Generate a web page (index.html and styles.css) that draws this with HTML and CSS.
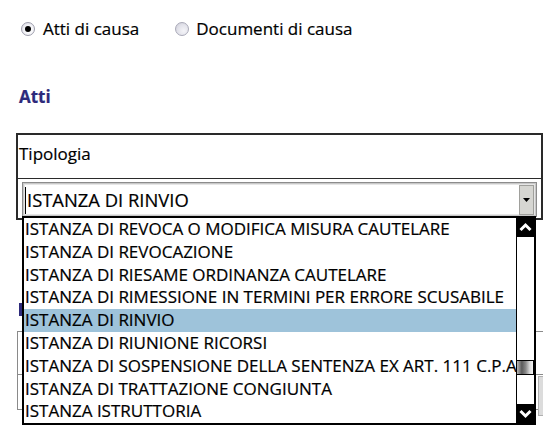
FILE: index.html
```html
<!DOCTYPE html>
<html lang="it">
<head>
<meta charset="utf-8">
<title>Atti di causa</title>
<link rel="stylesheet" href="styles.css">
</head>
<body>
<div class="page">
  <div class="radios">
    <label class="radio"><span class="dot checked"></span><span>Atti di causa</span></label>
    <label class="radio second"><span class="dot"></span><span>Documenti di causa</span></label>
  </div>

  <h2 class="heading">Atti</h2>

  <div class="box">
    <div class="box-head">Tipologia</div>
    <div class="box-body">
      <div class="select">
        <span class="caret"></span>
        <span class="value">ISTANZA DI RINVIO</span>
        <span class="btn">
          <svg width="9" height="6" viewBox="0 0 9 6"><path d="M1 1 L8 1 L4.5 5 Z" fill="#000"/></svg>
        </span>

        <div class="list">
          <ul class="items">
            <li>ISTANZA DI REVOCA O MODIFICA MISURA CAUTELARE</li>
            <li>ISTANZA DI REVOCAZIONE</li>
            <li>ISTANZA DI RIESAME ORDINANZA CAUTELARE</li>
            <li>ISTANZA DI RIMESSIONE IN TERMINI PER ERRORE SCUSABILE</li>
            <li class="selected">ISTANZA DI RINVIO</li>
            <li>ISTANZA DI RIUNIONE RICORSI</li>
            <li>ISTANZA DI SOSPENSIONE DELLA SENTENZA EX ART. 111 C.P.A.</li>
            <li>ISTANZA DI TRATTAZIONE CONGIUNTA</li>
            <li>ISTANZA ISTRUTTORIA</li>
          </ul>
          <div class="scrollbar">
            <span class="sb-btn">
              <svg width="17" height="17" viewBox="0 0 17 17"><path d="M3.5 11 L8.5 6 L13.5 11" fill="none" stroke="#fff" stroke-width="3"/></svg>
            </span>
            <span class="sb-track"><span class="sb-thumb"></span></span>
            <span class="sb-btn">
              <svg width="17" height="17" viewBox="0 0 17 17"><path d="M3.5 6 L8.5 11 L13.5 6" fill="none" stroke="#fff" stroke-width="3"/></svg>
            </span>
          </div>
        </div>
      </div>
    </div>
  </div>

  <div class="heading-two"></div>

  <div class="box2">
    <div class="box2-row"></div>
    <div class="box2-row last"><span class="box2-btn"></span></div>
  </div>
</div>
</body>
</html>
```

FILE: styles.css
```css
html, body {
  margin: 0;
  padding: 0;
  background: #fff;
}

body {
  font-family: "Open Sans", "Noto Sans", sans-serif;
  color: #000;
  overflow: hidden;
  width: 543px;
  height: 432px;
  -webkit-text-stroke: 0.2px currentColor;
}

.page {
  position: relative;
  width: 543px;
}

.radios {
  display: flex;
  align-items: center;
  padding: 18px 0 0 21px;
  height: 22px;
  font-size: 17px;
  line-height: 22px;
}

.radio {
  display: flex;
  align-items: center;
  gap: 8px;
}

.radio.second {
  margin-left: 36px;
  gap: 7px;
}

.dot {
  position: relative;
  width: 14px;
  height: 14px;
  border-radius: 50%;
  border: 1px solid #a9a9b8;
  background: radial-gradient(circle at 65% 65%, #f4f4f8 0%, #e2e2ea 55%, #c9c9d4 100%);
  box-sizing: border-box;
}

.dot.checked {
  border-color: #9d9dac;
  background: radial-gradient(circle at 60% 60%, #ffffff 0%, #f2f2f6 50%, #cfcfda 100%);
}

.dot.checked::after {
  content: "";
  position: absolute;
  left: 3px;
  top: 3px;
  width: 6px;
  height: 6px;
  border-radius: 50%;
  background: #000;
}

.heading {
  margin: 46px 0 0 19px;
  font-size: 17px;
  line-height: 22px;
  font-weight: 700;
  color: #2d2a7b;
}

.box {
  margin: 25px 0 0 16px;
  width: 527px;
  border: 2px solid #2a2a2a;
  box-sizing: border-box;
  height: 87px;
}

.box-head {
  padding: 8px 0 0 1px;
  height: 35px;
  font-size: 17px;
  line-height: 22px;
  border-bottom: 1px solid #2a2a2a;
  box-sizing: content-box;
}

.box-body {
  padding: 3px 0 0 4px;
}

.select {
  position: relative;
  display: flex;
  align-items: flex-start;
  width: 515px;
  height: 35px;
  box-sizing: border-box;
  border: 1px solid #8c8c8c;
  box-shadow: inset 0 0 0 1px #c8c8c8, inset 0 0 0 2px #e6e6e6;
  background: #fff;
}

.caret {
  width: 1px;
  height: 27px;
  margin: 4px 0 0 2px;
  background: #000;
}

.value {
  flex: 1;
  padding-left: 1px;
  font-size: 18.4px;
  line-height: 31px;
  margin-top: 1px;
}

.btn {
  display: flex;
  align-items: center;
  justify-content: center;
  width: 15px;
  height: 30px;
  margin: 2px 2px 0 0;
  box-sizing: border-box;
  background: #d6d6d2;
  border: 1px solid #a0a09c;
}

.list {
  position: absolute;
  left: -1px;
  top: 33px;
  width: 514px;
  display: flex;
  box-sizing: border-box;
  border: 2px solid #000;
  border-right: 0;
  background: #fff;
  z-index: 2;
}

.items {
  list-style: none;
  margin: 0;
  padding: 0;
  width: 492px;
  font-size: 17px;
  line-height: 22.8px;
  white-space: nowrap;
  overflow: hidden;
}

.items li {
  padding-left: 1px;
  height: 22.8px;
}

.items li.selected {
  background: #9ec3da;
}

.scrollbar {
  display: flex;
  flex-direction: column;
  width: 20px;
  box-sizing: border-box;
  border-left: 1px solid #000;
  border-right: 2px solid #000;
}

.sb-btn {
  display: flex;
  align-items: center;
  justify-content: center;
  height: 19px;
  background: #000;
}

.sb-track {
  flex: 1;
  position: relative;
  background: #fff;
}

.sb-thumb {
  position: absolute;
  left: -1px;
  right: 0;
  top: 123px;
  height: 15px;
  box-sizing: border-box;
  border: 1px solid #000;
  background: linear-gradient(to right, #b8b8b8 0%, #5a5a5a 30%, #8a8a8a 55%, #d8d8d8 80%, #f4f4f4 100%);
}

.heading-two {
  margin: 83px 0 0 19px;
  width: 4px;
  height: 13px;
  background: #2d2a7b;
}

.box2 {
  margin: 15px 0 0 17px;
  width: 540px;
  border: 1px solid #8a8a8a;
  border-right: 0;
}

.box2-row {
  height: 42px;
  border-bottom: 1px solid #8a8a8a;
}

.box2-row.last {
  position: relative;
  height: 34px;
  border-bottom: 0;
}

.box2-btn {
  position: absolute;
  left: 520px;
  top: 1px;
  width: 30px;
  height: 38px;
  background: #dcdcdc;
  border: 1px solid #b0b0b0;
}
```
